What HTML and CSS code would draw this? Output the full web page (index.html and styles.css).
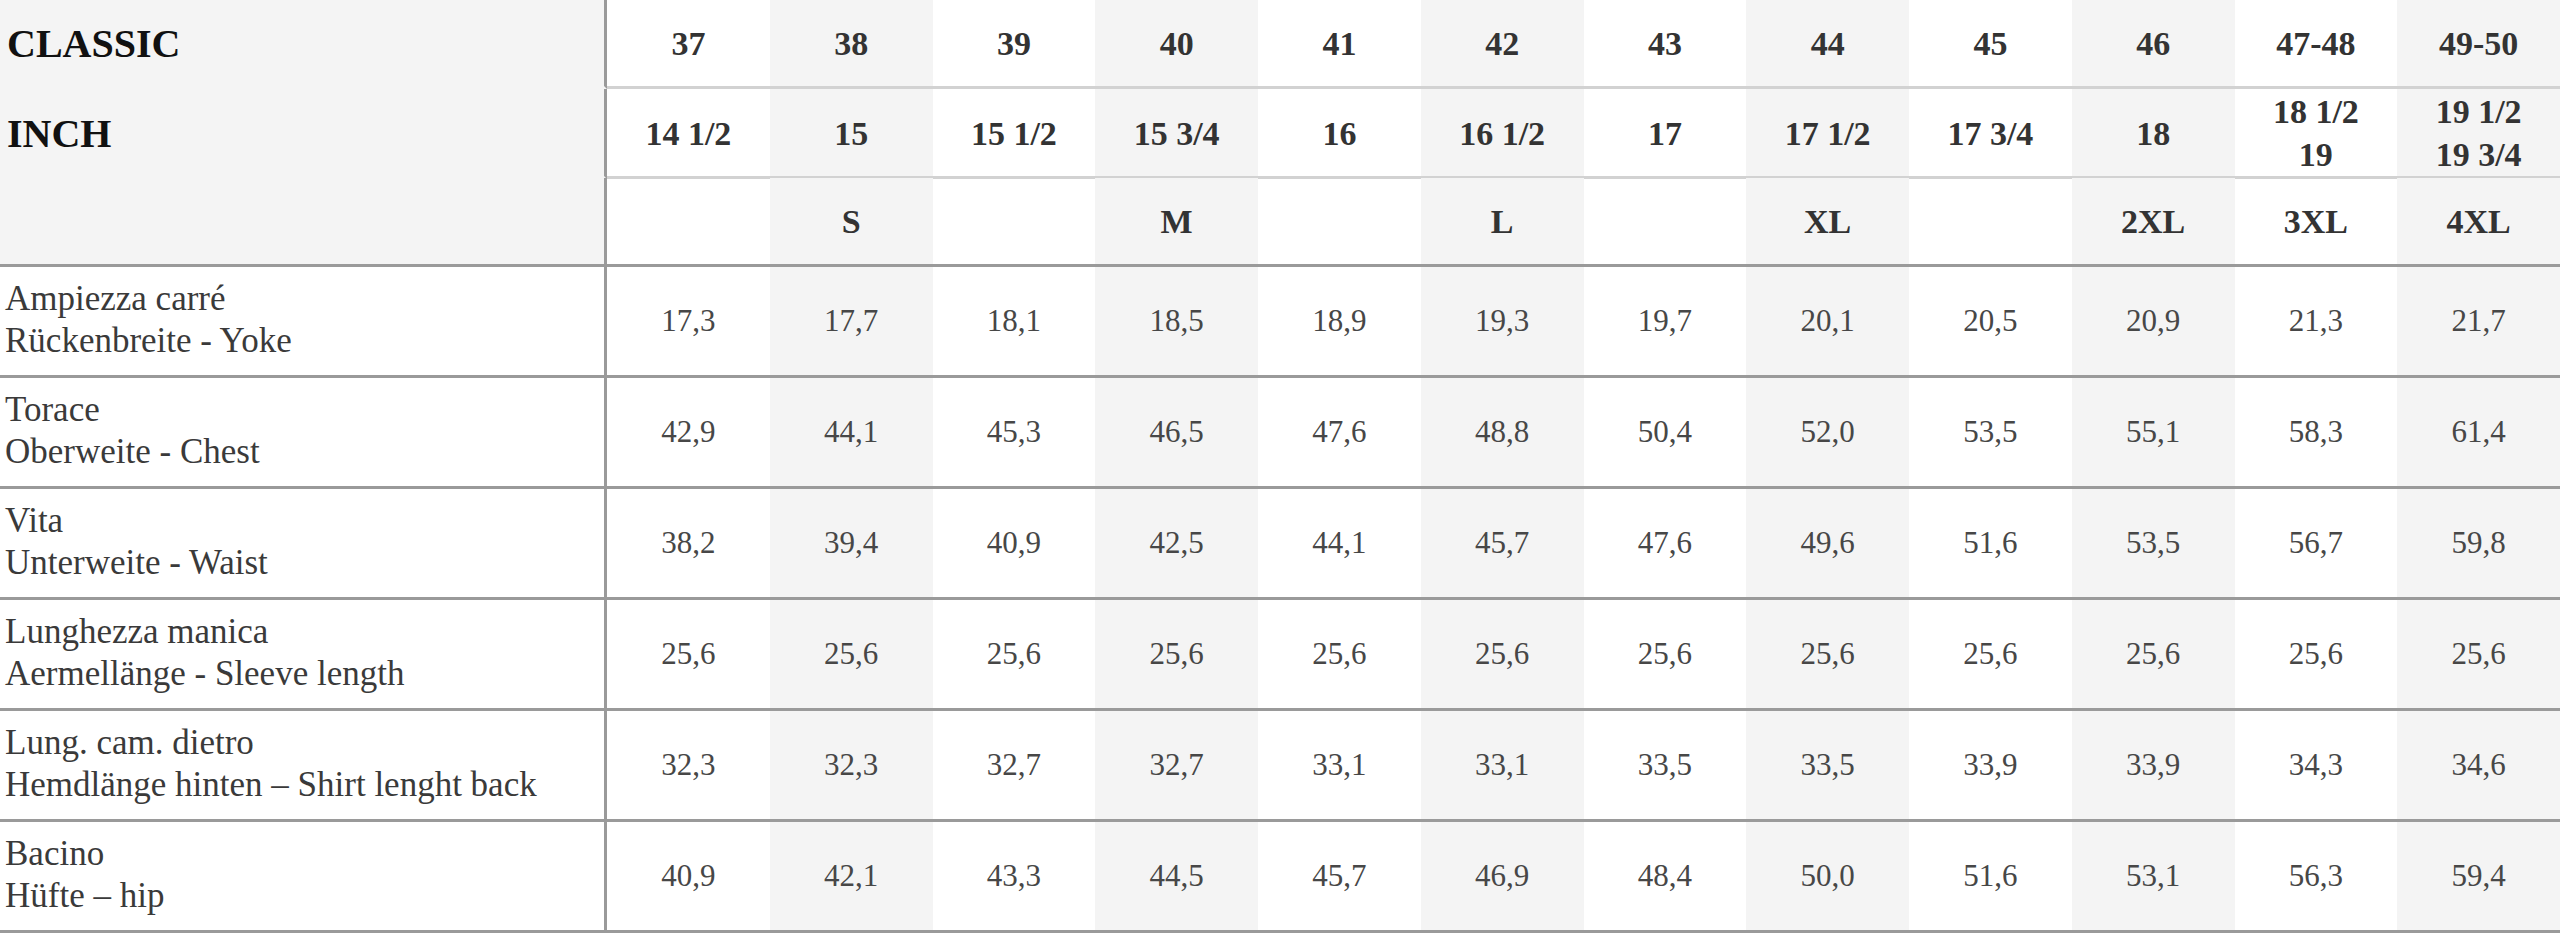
FILE: index.html
```html
<!DOCTYPE html>
<html lang="it">
<head>
<meta charset="utf-8">
<title>Size chart</title>
<link rel="stylesheet" href="styles.css">
</head>
<body>
<div class="chart">
  <div class="row head">
    <div class="cell label"><span class="title">CLASSIC</span></div>
    <div class="cell">37</div><div class="cell">38</div><div class="cell">39</div><div class="cell">40</div>
    <div class="cell">41</div><div class="cell">42</div><div class="cell">43</div><div class="cell">44</div>
    <div class="cell">45</div><div class="cell">46</div><div class="cell">47-48</div><div class="cell">49-50</div>
  </div>
  <div class="row head">
    <div class="cell label"><span class="title">INCH</span></div>
    <div class="cell">14 1/2</div><div class="cell">15</div><div class="cell">15 1/2</div><div class="cell">15 3/4</div>
    <div class="cell">16</div><div class="cell">16 1/2</div><div class="cell">17</div><div class="cell">17 1/2</div>
    <div class="cell">17 3/4</div><div class="cell">18</div><div class="cell">18 1/2<br>19</div><div class="cell">19 1/2<br>19 3/4</div>
  </div>
  <div class="row head last">
    <div class="cell label"></div>
    <div class="cell"></div><div class="cell">S</div><div class="cell"></div><div class="cell">M</div>
    <div class="cell"></div><div class="cell">L</div><div class="cell"></div><div class="cell">XL</div>
    <div class="cell"></div><div class="cell">2XL</div><div class="cell">3XL</div><div class="cell">4XL</div>
  </div>

  <div class="row body">
    <div class="cell label">Ampiezza carré<br>Rückenbreite - Yoke</div>
    <div class="cell">17,3</div><div class="cell">17,7</div><div class="cell">18,1</div><div class="cell">18,5</div>
    <div class="cell">18,9</div><div class="cell">19,3</div><div class="cell">19,7</div><div class="cell">20,1</div>
    <div class="cell">20,5</div><div class="cell">20,9</div><div class="cell">21,3</div><div class="cell">21,7</div>
  </div>
  <div class="row body">
    <div class="cell label">Torace<br>Oberweite - Chest</div>
    <div class="cell">42,9</div><div class="cell">44,1</div><div class="cell">45,3</div><div class="cell">46,5</div>
    <div class="cell">47,6</div><div class="cell">48,8</div><div class="cell">50,4</div><div class="cell">52,0</div>
    <div class="cell">53,5</div><div class="cell">55,1</div><div class="cell">58,3</div><div class="cell">61,4</div>
  </div>
  <div class="row body">
    <div class="cell label">Vita<br>Unterweite - Waist</div>
    <div class="cell">38,2</div><div class="cell">39,4</div><div class="cell">40,9</div><div class="cell">42,5</div>
    <div class="cell">44,1</div><div class="cell">45,7</div><div class="cell">47,6</div><div class="cell">49,6</div>
    <div class="cell">51,6</div><div class="cell">53,5</div><div class="cell">56,7</div><div class="cell">59,8</div>
  </div>
  <div class="row body">
    <div class="cell label">Lunghezza manica<br>Aermellänge - Sleeve length</div>
    <div class="cell">25,6</div><div class="cell">25,6</div><div class="cell">25,6</div><div class="cell">25,6</div>
    <div class="cell">25,6</div><div class="cell">25,6</div><div class="cell">25,6</div><div class="cell">25,6</div>
    <div class="cell">25,6</div><div class="cell">25,6</div><div class="cell">25,6</div><div class="cell">25,6</div>
  </div>
  <div class="row body">
    <div class="cell label">Lung. cam. dietro<br>Hemdlänge hinten – Shirt lenght back</div>
    <div class="cell">32,3</div><div class="cell">32,3</div><div class="cell">32,7</div><div class="cell">32,7</div>
    <div class="cell">33,1</div><div class="cell">33,1</div><div class="cell">33,5</div><div class="cell">33,5</div>
    <div class="cell">33,9</div><div class="cell">33,9</div><div class="cell">34,3</div><div class="cell">34,6</div>
  </div>
  <div class="row body">
    <div class="cell label">Bacino<br>Hüfte – hip</div>
    <div class="cell">40,9</div><div class="cell">42,1</div><div class="cell">43,3</div><div class="cell">44,5</div>
    <div class="cell">45,7</div><div class="cell">46,9</div><div class="cell">48,4</div><div class="cell">50,0</div>
    <div class="cell">51,6</div><div class="cell">53,1</div><div class="cell">56,3</div><div class="cell">59,4</div>
  </div>
</div>
</body>
</html>
```
FILE: styles.css
```css
* { box-sizing: border-box; }

html, body {
  margin: 0;
  padding: 0;
  background: #ffffff;
}

.chart {
  width: 2560px;
  font-family: "Liberation Serif", "Times New Roman", serif;
}

.row {
  display: grid;
  grid-template-columns: 607px repeat(12, 1fr);
}

.cell {
  display: flex;
  align-items: center;
  justify-content: center;
  text-align: center;
}

.row > .cell:nth-child(odd):not(:first-child) {
  background: #f4f4f4;
}

.cell.label {
  justify-content: flex-start;
  text-align: left;
  border-right: 3px solid #9a9a9a;
}

/* header */
.head {
  height: 89px;
}

.head .cell {
  font-weight: bold;
  font-size: 34px;
  line-height: 43px;
  color: #333333;
  border-bottom: 3px solid #d2d2d2;
  padding-top: 1px;
}

.head .cell.label {
  background: #f4f4f4;
  border-bottom: 3px solid transparent;
  padding-left: 7px;
}

.head.last .cell,
.head.last .cell.label {
  border-bottom: 3px solid #9a9a9a;
}

.title {
  font-size: 40px;
  color: #111111;
}

/* body */
.body {
  height: 111px;
}

.body .cell {
  font-size: 31px;
  line-height: 36px;
  color: #474747;
  border-bottom: 3px solid #9a9a9a;
}

.body .cell.label {
  font-size: 35px;
  line-height: 42px;
  color: #3a3a3a;
  padding-left: 5px;
  padding-bottom: 2px;
}
```
